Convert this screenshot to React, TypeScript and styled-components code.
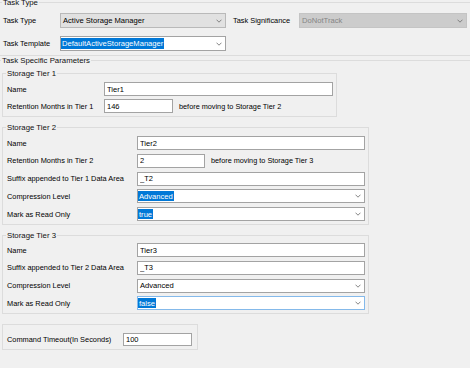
import React from "react";
import styled, { createGlobalStyle, css } from "styled-components";

const GlobalStyle = createGlobalStyle`
  html, body { margin: 0; padding: 0; background: #f0f0f0; overflow: hidden; }
  body { font-family: "Liberation Sans", Arial, sans-serif; color: #000; }
  * { box-sizing: border-box; }
`;

const Page = styled.div`
  width: 480px;
  height: 390px;
  margin: -2px 0 0 -2px;
  display: flex;
  flex-direction: column;
`;

const Group = styled.fieldset<{ $w?: number; $pad: string; $mt?: number; $grow?: boolean }>`
  margin: ${(p) => p.$mt ?? 0}px 0 0 0;
  min-width: 0;
  border: 1px solid #dcdcdc;
  padding: ${(p) => p.$pad};
  width: ${(p) => (p.$w ? `${p.$w}px` : "auto")};
  flex: ${(p) => (p.$grow ? "1 1 auto" : "0 0 auto")};
`;

const Legend = styled.legend<{ $shift?: number }>`
  font-size: 7.8px;
  line-height: 9px;
  padding: 0 1px;
  margin-left: ${(p) => p.$shift ?? -1}px;
  color: #111;
  white-space: nowrap;
`;

const Panel = styled.div<{ $w: number; $mt: number }>`
  width: ${(p) => p.$w}px;
  margin-top: ${(p) => p.$mt}px;
  border: 1px solid #dcdcdc;
  padding: 8px 4px 3px 4px;
`;

const Stack = styled.div<{ $gap: number }>`
  display: flex;
  flex-direction: column;
  gap: ${(p) => p.$gap}px;
`;

const Row = styled.div<{ $h: number }>`
  display: flex;
  align-items: center;
  height: ${(p) => p.$h}px;
`;

const Label = styled.span<{ $w: number; $ml?: number }>`
  flex: 0 0 ${(p) => p.$w}px;
  margin-left: ${(p) => p.$ml ?? 0}px;
  font-size: 7.4px;
  line-height: 9px;
  white-space: nowrap;
  color: #000;
`;

const Note = styled.span`
  margin-left: 6px;
  font-size: 7.3px;
  line-height: 9px;
  white-space: nowrap;
`;

const TextBox = styled.input<{ $w?: number }>`
  height: 100%;
  ${(p) =>
    p.$w
      ? css`
          flex: 0 0 ${p.$w}px;
          width: ${p.$w}px;
        `
      : css`
          flex: 1 1 auto;
          width: 0;
        `}
  border: 1px solid #a3a3a3;
  background: #fff;
  padding: 0 2px;
  margin: 0;
  font-family: inherit;
  font-size: 7.5px;
  color: #000;
  outline: none;
`;

type Tone = "gray" | "disabled" | "white" | "focus";
const tones: Record<Tone, { bg: string; border: string; fg: string }> = {
  gray: { bg: "#e1e1e1", border: "#b9b9b9", fg: "#000" },
  disabled: { bg: "#cccccc", border: "#c4c4c4", fg: "#858585" },
  white: { bg: "#ffffff", border: "#a3a3a3", fg: "#000" },
  focus: { bg: "#ffffff", border: "#84b9ea", fg: "#000" },
};

const ComboBox = styled.div<{ $tone: Tone; $w?: number }>`
  display: flex;
  align-items: center;
  height: 100%;
  ${(p) =>
    p.$w
      ? css`
          flex: 0 0 ${p.$w}px;
          width: ${p.$w}px;
        `
      : css`
          flex: 1 1 auto;
          min-width: 0;
        `}
  background: ${(p) => tones[p.$tone].bg};
  border: 1px solid ${(p) => tones[p.$tone].border};
  color: ${(p) => tones[p.$tone].fg};
  padding: 1px 3px 1px 0;
`;

const ComboValue = styled.span<{ $selected?: boolean }>`
  height: 100%;
  display: flex;
  align-items: center;
  font-size: 7.6px;
  padding: 0 1px 0 ${(p) => (p.$selected ? 1 : 2)}px;
  white-space: nowrap;
  ${(p) =>
    p.$selected &&
    css`
      background: #0078d7;
      color: #fff;
    `}
`;

const Chevron = styled.svg`
  margin-left: auto;
  flex: 0 0 auto;
`;

const Arrow = () => (
  <Chevron width="6" height="4" viewBox="0 0 6 4">
    <polyline points="0.5,0.7 3,3.2 5.5,0.7" fill="none" stroke="#777" strokeWidth="0.9" />
  </Chevron>
);

const Combo: React.FC<{ tone: Tone; w?: number; value: string; selected?: boolean }> = ({
  tone,
  w,
  value,
  selected,
}) => (
  <ComboBox $tone={tone} $w={w}>
    <ComboValue $selected={selected}>{value}</ComboValue>
    <Arrow />
  </ComboBox>
);

export default function App() {
  return (
    <>
      <GlobalStyle />
      <Page>
        <Group $pad="6px 0 4px 4px">
          <Legend>Task Type</Legend>
          <Stack $gap={8}>
            <Row $h={15}>
              <Label $w={57}>Task Type</Label>
              <Combo tone="gray" w={166} value="Active Storage Manager" />
              <Label $w={66} $ml={7}>
                Task Significance
              </Label>
              <Combo tone="disabled" w={168} value="DoNotTrack" />
            </Row>
            <Row $h={15}>
              <Label $w={57}>Task Template</Label>
              <Combo tone="white" w={166} value="DefaultActiveStorageManager" selected />
            </Row>
          </Stack>
        </Group>

        <Group $pad="4px 0 0 3px" $grow>
          <Legend>Task Specific Parameters</Legend>
          <Stack $gap={6}>
            <Group $w={335} $pad="4px 3px 3px 4px">
              <Legend>Storage Tier 1</Legend>
              <Stack $gap={3}>
                <Row $h={14}>
                  <Label $w={97}>Name</Label>
                  <TextBox readOnly defaultValue="Tier1" />
                </Row>
                <Row $h={14}>
                  <Label $w={97}>Retention Months in Tier 1</Label>
                  <TextBox readOnly defaultValue="146" $w={69} />
                  <Note>before moving to Storage Tier 2</Note>
                </Row>
              </Stack>
            </Group>

            <Group $w={367} $pad="4px 3px 3px 4px">
              <Legend>Storage Tier 2</Legend>
              <Stack $gap={3.75}>
                <Row $h={14}>
                  <Label $w={130}>Name</Label>
                  <TextBox readOnly defaultValue="Tier2" />
                </Row>
                <Row $h={14}>
                  <Label $w={130}>Retention Months in Tier 2</Label>
                  <TextBox readOnly defaultValue="2" $w={68} />
                  <Note>before moving to Storage Tier 3</Note>
                </Row>
                <Row $h={14}>
                  <Label $w={130}>Suffix appended to Tier 1 Data Area</Label>
                  <TextBox readOnly defaultValue="_T2" />
                </Row>
                <Row $h={14}>
                  <Label $w={130}>Compression Level</Label>
                  <Combo tone="white" value="Advanced" selected />
                </Row>
                <Row $h={14}>
                  <Label $w={130}>Mark as Read Only</Label>
                  <Combo tone="white" value="true" selected />
                </Row>
              </Stack>
            </Group>

            <Group $w={367} $pad="3px 3px 3px 4px">
              <Legend>Storage Tier 3</Legend>
              <Stack $gap={3.75}>
                <Row $h={14}>
                  <Label $w={130}>Name</Label>
                  <TextBox readOnly defaultValue="Tier3" />
                </Row>
                <Row $h={14}>
                  <Label $w={130}>Suffix appended to Tier 2 Data Area</Label>
                  <TextBox readOnly defaultValue="_T3" />
                </Row>
                <Row $h={14}>
                  <Label $w={130}>Compression Level</Label>
                  <Combo tone="white" value="Advanced" />
                </Row>
                <Row $h={14}>
                  <Label $w={130}>Mark as Read Only</Label>
                  <Combo tone="focus" value="false" selected />
                </Row>
              </Stack>
            </Group>

            <Panel $w={196} $mt={4}>
              <Row $h={13}>
                <Label $w={116}>Command Timeout(In Seconds)</Label>
                <TextBox readOnly defaultValue="100" $w={69} />
              </Row>
            </Panel>
          </Stack>
        </Group>
      </Page>
    </>
  );
}
